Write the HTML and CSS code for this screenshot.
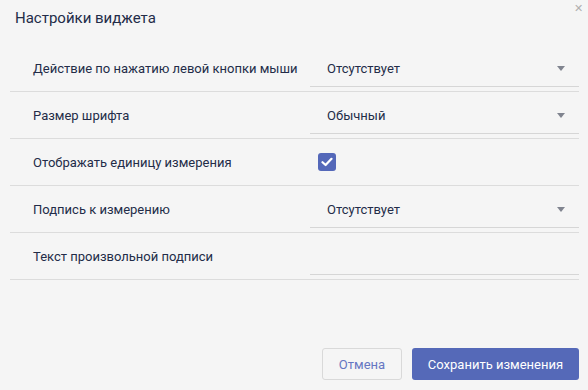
FILE: index.html
```html
<!DOCTYPE html>
<html lang="ru">
<head>
    <meta charset="UTF-8">
    <title>Настройки виджета</title>
    <link rel="stylesheet" href="styles.css">
</head>
<body>
    <div class="dialog">
        <div class="dialog-header">
            <div class="dialog-title">Настройки виджета</div>
            <button class="close-btn">&#x2715;</button>
        </div>

        <div class="settings">
            <div class="setting-row">
                <div class="setting-label">Действие по нажатию левой кнопки мыши</div>
                <div class="select">
                    <span class="select-value">Отсутствует</span>
                    <span class="select-arrow"></span>
                </div>
            </div>
            <div class="setting-row">
                <div class="setting-label">Размер шрифта</div>
                <div class="select">
                    <span class="select-value">Обычный</span>
                    <span class="select-arrow"></span>
                </div>
            </div>
            <div class="setting-row">
                <div class="setting-label">Отображать единицу измерения</div>
                <div class="checkbox checked">
                    <svg width="12" height="10" viewBox="0 0 12 10">
                        <path d="M1.5 5.2 L4.6 8 L10.5 1.8" fill="none" stroke="#fff" stroke-width="2.2" stroke-linecap="round" stroke-linejoin="round"/>
                    </svg>
                </div>
            </div>
            <div class="setting-row">
                <div class="setting-label">Подпись к измерению</div>
                <div class="select">
                    <span class="select-value">Отсутствует</span>
                    <span class="select-arrow"></span>
                </div>
            </div>
            <div class="setting-row">
                <div class="setting-label">Текст произвольной подписи</div>
                <input class="text-input" type="text">
            </div>
        </div>

        <div class="dialog-footer">
            <button class="btn btn-cancel">Отмена</button>
            <button class="btn btn-primary">Сохранить изменения</button>
        </div>
    </div>
</body>
</html>
```

FILE: styles.css
```css
/* Page */
html, body {
    margin: 0;
    height: 100%;
}

body {
    background: #f5f5f5;
    font-family: Roboto, "Liberation Sans", sans-serif;
    color: #232c48;
}

.dialog {
    height: 100%;
    display: flex;
    flex-direction: column;
    box-sizing: border-box;
    padding: 0 9px 10px 10px;
}

/* Header */
.dialog-header {
    height: 45px;
    display: flex;
    justify-content: space-between;
    align-items: flex-start;
}

.dialog-title {
    font-size: 15px;
    margin: 9px 0 0 5px;
    line-height: 18px;
}

.close-btn {
    background: none;
    border: none;
    padding: 0;
    margin: 1px -4px 0 0;
    color: #b0b0b0;
    font-size: 11px;
    line-height: 14px;
    cursor: pointer;
}

/* Setting rows */
.setting-row {
    display: grid;
    grid-template-columns: 300px 1fr;
    align-items: center;
    height: 46px;
    border-bottom: 1px solid #dcdcdc;
    font-size: 13px;
}

.setting-label {
    padding-left: 23px;
}

.select {
    align-self: end;
    margin-bottom: 4px;
    height: 36px;
    box-sizing: border-box;
    border-bottom: 1px solid #d6d6d6;
    display: flex;
    align-items: center;
    justify-content: space-between;
    padding: 0 14px 0 17px;
}

.select-arrow {
    width: 0;
    height: 0;
    border-left: 4px solid transparent;
    border-right: 4px solid transparent;
    border-top: 5px solid #80848f;
}

.checkbox {
    width: 18px;
    height: 18px;
    margin-left: 8px;
    border-radius: 3px;
    background: #5468b9;
    display: flex;
    align-items: center;
    justify-content: center;
}

.text-input {
    align-self: end;
    margin: 0 0 4px;
    height: 36px;
    box-sizing: border-box;
    border: none;
    border-bottom: 1px solid #d6d6d6;
    background: transparent;
    outline: none;
    font: inherit;
    padding: 0 17px;
}

/* Footer */
.dialog-footer {
    margin-top: auto;
    display: flex;
    justify-content: flex-end;
    gap: 10px;
}

.btn {
    height: 32px;
    border-radius: 3px;
    font-family: Roboto, "Liberation Sans", sans-serif;
    font-size: 13px;
    cursor: pointer;
}

.btn-cancel {
    width: 80px;
    background: #f5f5f5;
    border: 1px solid #d9d9d9;
    color: #6677c2;
}

.btn-primary {
    width: 167px;
    background: #5569b8;
    border: none;
    color: #fff;
}
```
